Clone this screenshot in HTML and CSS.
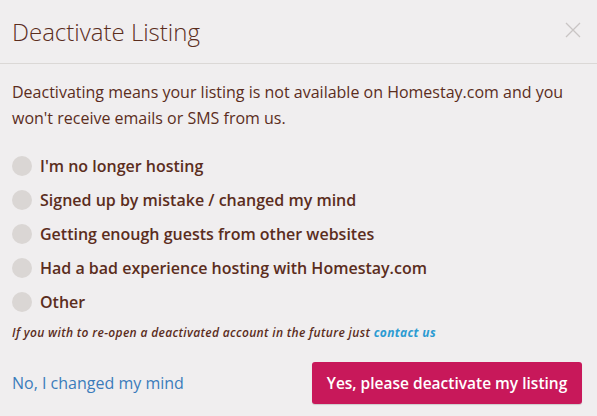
FILE: index.html
```html
<!DOCTYPE html>
<html>
<head>
<meta charset="utf-8">
<link rel="stylesheet" href="styles.css">
</head>
<body>
<div class="modal">
  <div class="header">
    <h1 class="title">Deactivate Listing</h1>
    <button class="close" aria-label="Close">
      <svg width="16" height="16" viewBox="0 0 16 16"><path d="M1 1L15 15M15 1L1 15" stroke="#c9c5c4" stroke-width="1.3" fill="none"/></svg>
    </button>
  </div>
  <div class="body">
    <p class="intro">Deactivating means your listing is not available on Homestay.com and you won't receive emails or SMS from us.</p>
    <ul class="options">
      <li class="option"><span class="radio"></span><span>I'm no longer hosting</span></li>
      <li class="option"><span class="radio"></span><span>Signed up by mistake / changed my mind</span></li>
      <li class="option"><span class="radio"></span><span>Getting enough guests from other websites</span></li>
      <li class="option"><span class="radio"></span><span>Had a bad experience hosting with Homestay.com</span></li>
      <li class="option"><span class="radio"></span><span>Other</span></li>
    </ul>
    <p class="note">If you with to re-open a deactivated account in the future just <a href="#" class="note-link">contact us</a></p>
  </div>
  <div class="footer">
    <a href="#" class="cancel">No, I changed my mind</a>
    <button class="confirm">Yes, please deactivate my listing</button>
  </div>
</div>
</body>
</html>
```
FILE: styles.css
```css
html, body {
  margin: 0;
  padding: 0;
  background: #f0eeef;
  font-family: "Open Sans", sans-serif;
  color: #5b2d1d;
}
.modal {
  width: 597px;
  height: 416px;
}
.header {
  height: 64px;
  border-bottom: 1px solid #dbd8d6;
  display: flex;
  align-items: center;
  justify-content: space-between;
  padding: 0 16px 0 12px;
  box-sizing: border-box;
}
.title {
  margin: 0;
  font-size: 24px;
  font-weight: 300;
  color: #5b2d1d;
}
.close {
  background: none;
  border: 0;
  padding: 0;
  width: 16px;
  height: 16px;
  display: flex;
  margin-top: -4px;
}
.body {
  padding: 15px 12px 0;
}
.intro {
  margin: 0;
  font-size: 16px;
  line-height: 26px;
}
.options {
  list-style: none;
  margin: 23px 0 0;
  padding: 0;
  display: flex;
  flex-direction: column;
  gap: 10px;
}
.option {
  display: flex;
  align-items: center;
  gap: 8px;
  height: 24px;
  font-size: 16px;
  font-weight: 600;
}
.radio {
  width: 20px;
  height: 20px;
  border-radius: 50%;
  background: #dad6d4;
}
.note {
  margin: 10px 0 0;
  font-size: 12px;
  font-style: italic;
  font-weight: 600;
  line-height: 18px;
  letter-spacing: 0.34px;
}
.note-link {
  color: #2c9bd2;
  text-decoration: none;
  font-weight: 700;
}
.footer {
  display: flex;
  align-items: center;
  justify-content: space-between;
  padding: 20px 15px 0 12px;
}
.cancel {
  color: #3b7cbb;
  text-decoration: none;
  font-size: 16px;
}
.confirm {
  background: #c8185a;
  color: #fff;
  border: 0;
  border-radius: 3px;
  height: 42px;
  width: 270px;
  padding: 0;
  font-family: "Open Sans", sans-serif;
  font-size: 15.5px;
  font-weight: 600;
  box-shadow: 0 1px 1px rgba(0,0,0,0.15);
}
```
